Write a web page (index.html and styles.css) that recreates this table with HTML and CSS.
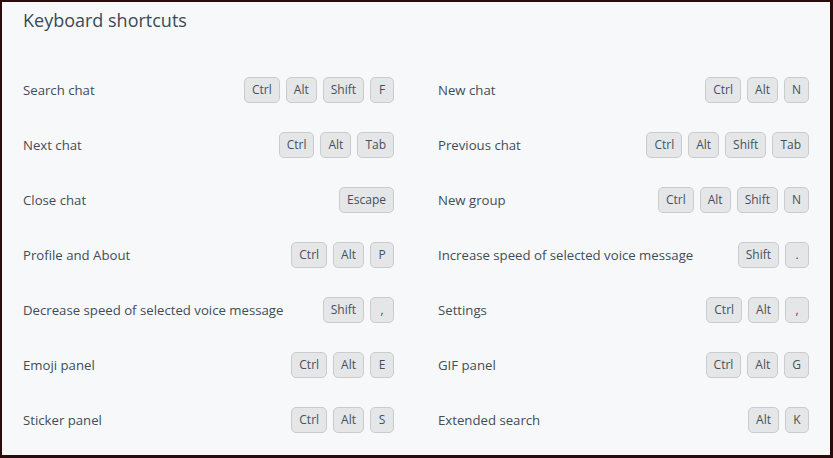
FILE: index.html
```html
<!DOCTYPE html>
<html lang="en">
<head>
<meta charset="utf-8">
<title>Keyboard shortcuts</title>
<link rel="stylesheet" href="styles.css">
</head>
<body>
<div class="frame">
  <h1 class="title">Keyboard shortcuts</h1>
  <div class="grid">
    <div class="row"><span class="label">Search chat</span><span class="keys"><kbd>Ctrl</kbd><kbd>Alt</kbd><kbd>Shift</kbd><kbd>F</kbd></span></div>
    <div class="row"><span class="label">New chat</span><span class="keys"><kbd>Ctrl</kbd><kbd>Alt</kbd><kbd>N</kbd></span></div>
    <div class="row"><span class="label">Next chat</span><span class="keys"><kbd>Ctrl</kbd><kbd>Alt</kbd><kbd>Tab</kbd></span></div>
    <div class="row"><span class="label">Previous chat</span><span class="keys"><kbd>Ctrl</kbd><kbd>Alt</kbd><kbd>Shift</kbd><kbd>Tab</kbd></span></div>
    <div class="row"><span class="label">Close chat</span><span class="keys"><kbd>Escape</kbd></span></div>
    <div class="row"><span class="label">New group</span><span class="keys"><kbd>Ctrl</kbd><kbd>Alt</kbd><kbd>Shift</kbd><kbd>N</kbd></span></div>
    <div class="row"><span class="label">Profile and About</span><span class="keys"><kbd>Ctrl</kbd><kbd>Alt</kbd><kbd>P</kbd></span></div>
    <div class="row"><span class="label">Increase speed of selected voice message</span><span class="keys"><kbd>Shift</kbd><kbd>.</kbd></span></div>
    <div class="row"><span class="label">Decrease speed of selected voice message</span><span class="keys"><kbd>Shift</kbd><kbd>,</kbd></span></div>
    <div class="row"><span class="label">Settings</span><span class="keys"><kbd>Ctrl</kbd><kbd>Alt</kbd><kbd>,</kbd></span></div>
    <div class="row"><span class="label">Emoji panel</span><span class="keys"><kbd>Ctrl</kbd><kbd>Alt</kbd><kbd>E</kbd></span></div>
    <div class="row"><span class="label">GIF panel</span><span class="keys"><kbd>Ctrl</kbd><kbd>Alt</kbd><kbd>G</kbd></span></div>
    <div class="row"><span class="label">Sticker panel</span><span class="keys"><kbd>Ctrl</kbd><kbd>Alt</kbd><kbd>S</kbd></span></div>
    <div class="row"><span class="label">Extended search</span><span class="keys"><kbd>Alt</kbd><kbd>K</kbd></span></div>
  </div>
</div>
</body>
</html>
```
FILE: styles.css
```css
* { box-sizing: border-box; }
html, body { margin: 0; padding: 0; }
body {
  width: 833px;
  height: 458px;
  overflow: hidden;
  font-family: "Open Sans", "Noto Sans", sans-serif;
  color: #3b4a54;
}
.frame {
  width: 833px;
  height: 458px;
  background: #f7f8fa;
  border-style: solid;
  border-color: #2a0a0a;
  border-width: 2px 3px 3px 2px;
  padding: 5px 21px 0 21px;
}
.title {
  margin: 0;
  font-size: 18px;
  font-weight: 400;
  line-height: 26px;
  color: #3b4a54;
}
.grid {
  margin-top: 29px;
  display: grid;
  grid-template-columns: 371px 371px;
  column-gap: 44px;
  grid-auto-rows: 55px;
}
.row {
  display: flex;
  align-items: center;
  justify-content: space-between;
}
.label {
  font-size: 13.2px;
  color: #3f4d57;
}
.keys {
  display: flex;
  gap: 6px;
}
kbd {
  font-family: "Open Sans", "Noto Sans", sans-serif;
  font-size: 12px;
  color: #44525c;
  height: 26px;
  min-width: 24px;
  padding: 0 7px;
  display: flex;
  align-items: center;
  justify-content: center;
  background: #e4e6e8;
  border: 1px solid #c9cbcd;
  border-radius: 5px;
}
```
